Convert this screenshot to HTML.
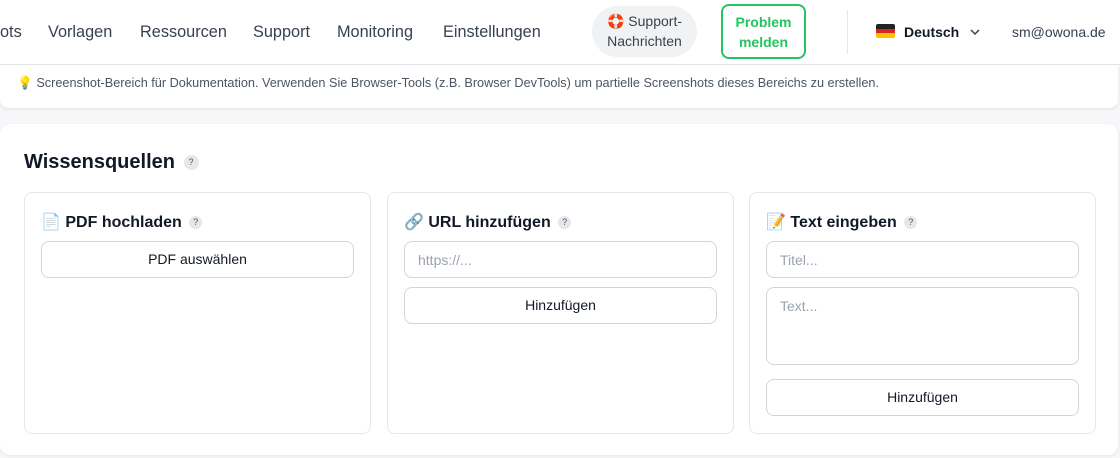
<!DOCTYPE html>
<html><head><meta charset="utf-8"><style>
*{box-sizing:border-box;margin:0;padding:0}
body{width:1120px;height:458px;overflow:hidden;background:#f6f7f9;font-family:"Liberation Sans",Arial,sans-serif;position:relative;color:#111827}
.hdr{position:absolute;left:0;top:0;width:1120px;height:65px;background:#fff;border-bottom:1px solid #e5e7eb}
.nav{position:absolute;top:23px;font-size:16.3px;color:#374151}
.pill{position:absolute;left:592px;top:6px;width:105px;height:51px;background:#f1f2f4;border-radius:26px;font-size:14px;color:#374151;text-align:center;line-height:20px;padding-top:5px}
.pm{position:absolute;left:721px;top:4px;width:85px;height:55px;border:2px solid #22c55e;border-radius:8px;color:#22c55e;font-weight:bold;font-size:14px;text-align:center;line-height:20px;padding-top:6px}
.div{position:absolute;left:847px;top:10px;width:1px;height:44px;background:#e5e7eb}
.info{position:absolute;left:0;top:65px;width:1118px;height:43px;background:#fff;border-radius:0 0 8px 8px;box-shadow:0 1px 3px rgba(0,0,0,.1);font-size:12.7px;color:#4b5563;padding:11px 0 0 17px;white-space:nowrap}
.main{position:absolute;left:0;top:124px;width:1118px;height:331px;background:#fff;border-radius:10px;box-shadow:0 1px 3px rgba(0,0,0,.08)}
h2{position:absolute;left:24px;top:27px;font-size:20px;font-weight:bold;color:#111827}
.q{display:inline-block;width:15px;height:15px;border-radius:50%;background:#e5e7eb;color:#4b5563;font-size:9px;text-align:center;line-height:15px;vertical-align:middle;font-weight:normal;margin-left:3px}
.card{position:absolute;top:68px;width:347px;height:242px;border:1px solid #e5e7eb;border-radius:8px}
.ct{position:absolute;left:16px;top:19px;font-size:16px;font-weight:bold;color:#111827}
.btn,.inp{position:absolute;left:16px;width:313px;height:37px;border:1px solid #d1d5db;border-radius:8px;font-size:14px}
.btn{text-align:center;line-height:35px;color:#111827}
.inp{color:#9ca3af;padding:10px 0 0 13px}
</style></head><body>
<div class="hdr">
<span class="nav" style="left:0">ots</span>
<span class="nav" style="left:48px">Vorlagen</span>
<span class="nav" style="left:140px">Ressourcen</span>
<span class="nav" style="left:253px">Support</span>
<span class="nav" style="left:337px">Monitoring</span>
<span class="nav" style="left:443px">Einstellungen</span>
<div class="pill">🛟 Support-<br>Nachrichten</div>
<div class="pm">Problem<br>melden</div>
<div class="div"></div>
<div style="position:absolute;left:876px;top:24px;width:19px;height:14px;border-radius:2px;overflow:hidden"><div style="height:5px;background:#222"></div><div style="height:4px;background:#dd2222"></div><div style="height:5px;background:#f5c400"></div></div>
<span style="position:absolute;left:904px;top:24px;font-size:14px;font-weight:bold;color:#111827">Deutsch</span>
<svg style="position:absolute;left:969px;top:27px" width="12" height="10" viewBox="0 0 12 10"><path d="M2 3l4 4 4-4" stroke="#374151" stroke-width="1.5" fill="none"/></svg>
<span style="position:absolute;left:1012px;top:24px;font-size:14px;color:#374151">sm@owona.de</span>
</div>
<div class="info">💡 Screenshot-Bereich für Dokumentation. Verwenden Sie Browser-Tools (z.B. Browser DevTools) um partielle Screenshots dieses Bereichs zu erstellen.</div>
<div class="main">
<h2>Wissensquellen <span class="q">?</span></h2>
<div class="card" style="left:24px"><div class="ct">📄 PDF hochladen <span class="q" style="width:13px;height:13px;line-height:13px">?</span></div>
<div class="btn" style="top:48px">PDF auswählen</div></div>
<div class="card" style="left:387px"><div class="ct">🔗 URL hinzufügen <span class="q" style="width:13px;height:13px;line-height:13px">?</span></div>
<div class="inp" style="top:48px">https://...</div>
<div class="btn" style="top:94px">Hinzufügen</div></div>
<div class="card" style="left:749px"><div class="ct">📝 Text eingeben <span class="q" style="width:13px;height:13px;line-height:13px">?</span></div>
<div class="inp" style="top:48px">Titel...</div>
<div class="inp" style="top:94px;height:78px">Text...</div>
<div class="btn" style="top:186px">Hinzufügen</div></div>
</div>
</body></html>
